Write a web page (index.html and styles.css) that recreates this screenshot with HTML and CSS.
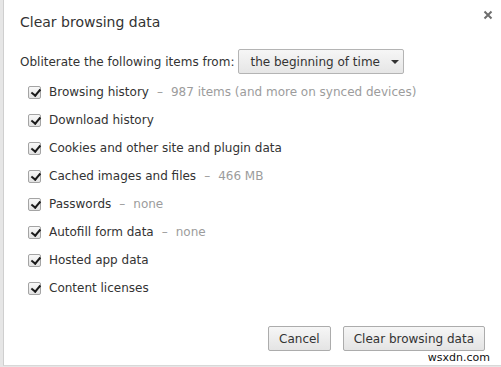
FILE: index.html
```html
<!DOCTYPE html>
<html>
<head>
<meta charset="utf-8">
<link rel="stylesheet" href="styles.css">
</head>
<body>
<div class="backdrop">
  <div class="dialog">
    <h1 class="title">Clear browsing data</h1>
    <svg class="close" width="10" height="10" viewBox="0 0 10 10"><path d="M1.5 1.5 L8.5 8.5 M8.5 1.5 L1.5 8.5" stroke="#6e6e6e" stroke-width="2"/></svg>
    <div class="from-row">
      <span>Obliterate the following items from:</span>
      <div class="select"><span>the beginning of time</span><span class="arrow"></span></div>
    </div>
    <ul class="items">
      <li><span class="cb"></span>Browsing history<span class="note"><span class="dash">–</span>987 items (and more on synced devices)</span></li>
      <li><span class="cb"></span>Download history</li>
      <li><span class="cb"></span>Cookies and other site and plugin data</li>
      <li><span class="cb"></span>Cached images and files<span class="note"><span class="dash">–</span>466 MB</span></li>
      <li><span class="cb"></span>Passwords<span class="note"><span class="dash">–</span>none</span></li>
      <li><span class="cb"></span>Autofill form data<span class="note"><span class="dash">–</span>none</span></li>
      <li><span class="cb"></span>Hosted app data</li>
      <li><span class="cb"></span>Content licenses</li>
    </ul>
    <div class="actions">
      <button class="btn">Cancel</button>
      <button class="btn">Clear browsing data</button>
    </div>
  </div>
  <span class="watermark">wsxdn.com</span>
</div>
</body>
</html>
```
FILE: styles.css
```css
* { box-sizing: border-box; }
html, body { margin: 0; padding: 0; }
body {
  width: 501px; height: 367px; overflow: hidden;
  background: #e6e6e6;
  font-family: "DejaVu Sans", sans-serif;
  font-size: 12px;
  color: #333;
}
.backdrop { position: relative; height: 367px; padding-left: 3px; }
.dialog {
  position: relative;
  height: 366px;
  background: #fff;
  border-left: 1px solid #cfcfcf;
  border-bottom: 1px solid #d8d8d8;
  display: flex; flex-direction: column;
  padding: 14px 0 0 16px;
}
.title { margin: 0; font-size: 14px; line-height: 16px; font-weight: normal; color: #333; }
.close { position: absolute; right: 8px; top: 10px; }
.from-row { display: flex; align-items: center; margin-top: 19px; gap: 4px; }
.select {
  display: flex; align-items: center; gap: 11px;
  height: 25px; padding: 0 4px 0 11px;
  border: 1px solid #b4b4b4; border-radius: 2px;
  background: linear-gradient(#f6f6f6, #e6e6e6);
  color: #333;
}
.arrow { width: 0; height: 0; border-left: 4px solid transparent; border-right: 4px solid transparent; border-top: 4px solid #333; margin-top: 1px; }
.items { list-style: none; margin: 4px 0 0; padding: 0 0 0 8px; }
.items li { display: flex; align-items: center; height: 28px; }
.cb {
  width: 13px; height: 13px; margin-right: 8px;
  border: 1px solid #a4a4a4; border-radius: 2px;
  background: linear-gradient(#f8f8f8, #e2e2e2);
  position: relative;
}
.cb::after {
  content: ""; position: absolute; left: 3.5px; top: 0px;
  width: 3.5px; height: 7px;
  border: solid #1a1a1a; border-width: 0 2.5px 2.5px 0;
  transform: rotate(40deg);
}
.note { color: #9c9c9c; margin-left: 8px; }
.dash { margin-right: 8px; }
.actions { margin-top: auto; display: flex; justify-content: flex-end; gap: 12px; padding: 0 16px 14px 0; }
.btn {
  font-family: "DejaVu Sans", sans-serif;
  font-size: 12px; color: #333;
  height: 25px; padding: 0 10px;
  border: 1px solid #acacac; border-radius: 2px;
  background: linear-gradient(#f6f6f6, #e4e4e4);
}
.watermark { position: absolute; right: 11px; bottom: 3px; font-family: "DejaVu Sans", sans-serif; font-size: 11px; line-height: 13px; color: #111; }
```
